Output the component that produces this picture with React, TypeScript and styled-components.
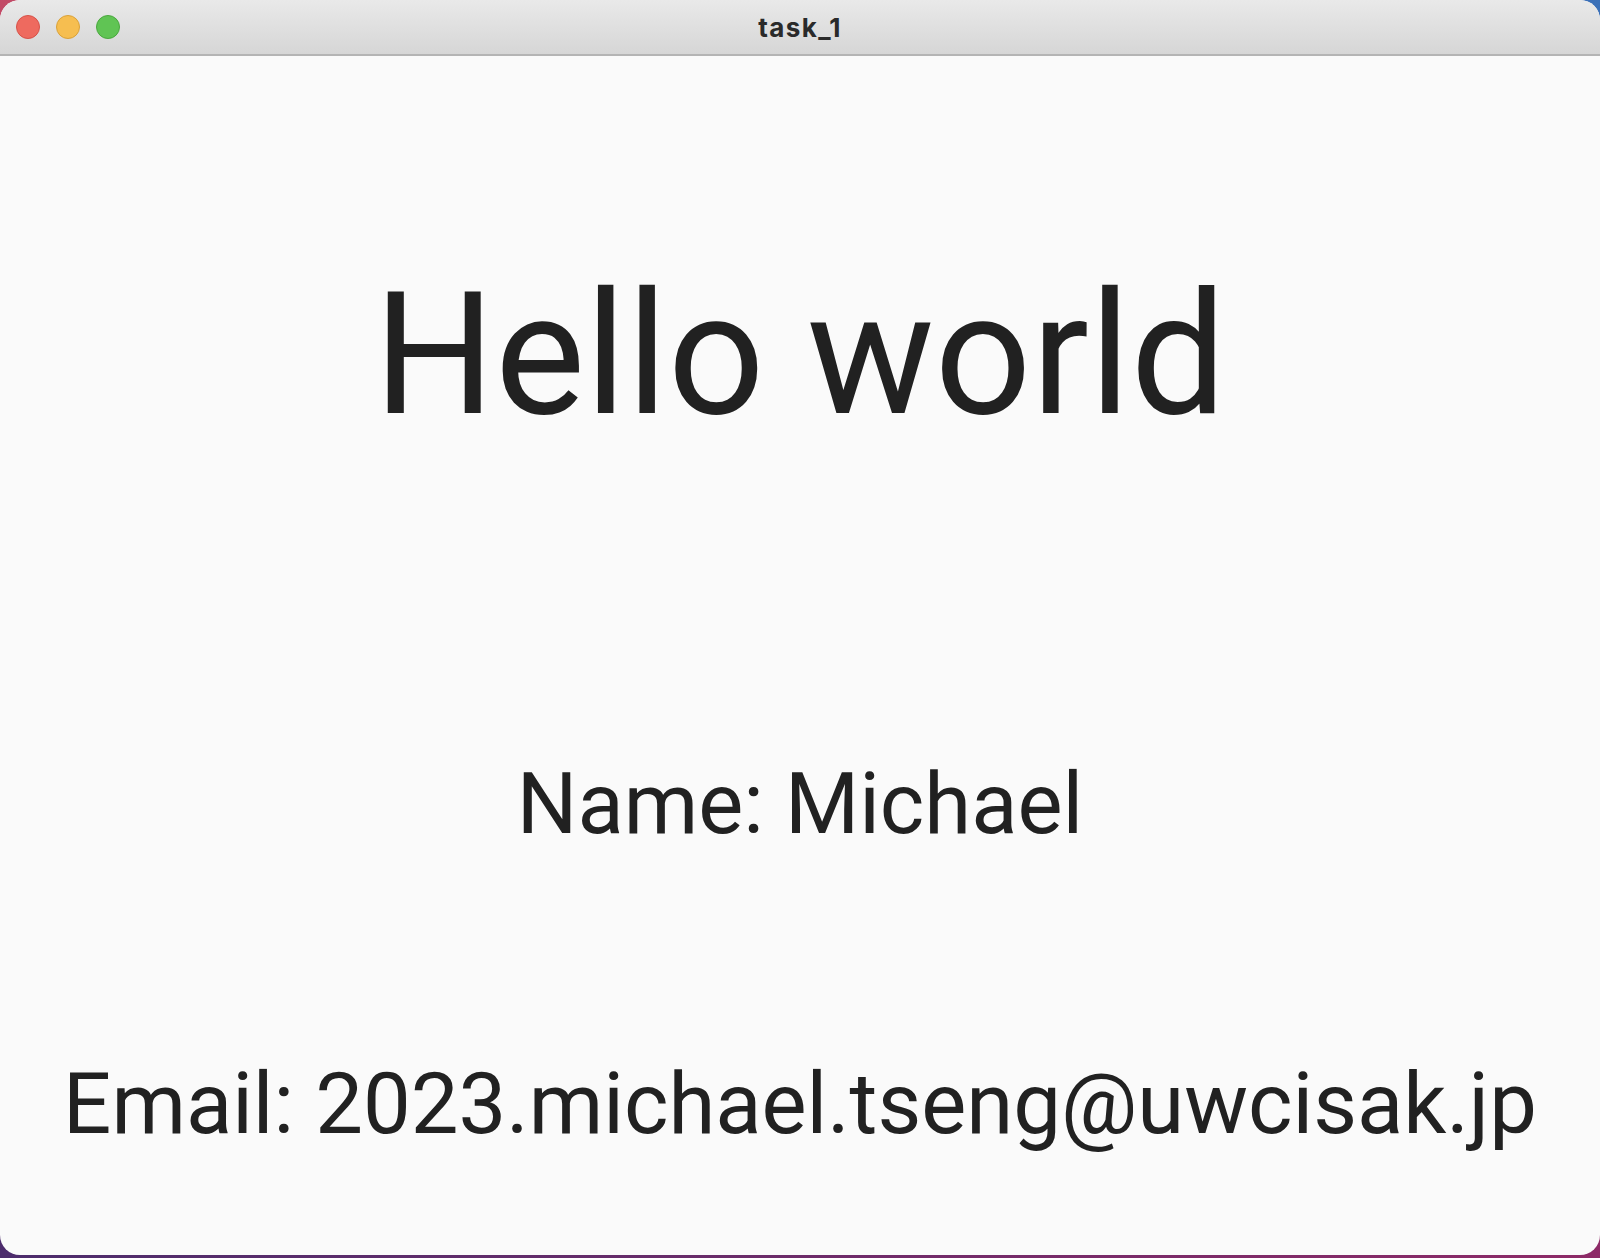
import React from "react";
import styled, { createGlobalStyle } from "styled-components";

const GlobalStyle = createGlobalStyle`
  html, body {
    margin: 0;
    padding: 0;
    width: 1600px;
    height: 1258px;
    overflow: hidden;
  }
`;

const Desktop = styled.div`
  width: 1600px;
  height: 1258px;
  display: flex;
  flex-direction: column;
  background:
    linear-gradient(90deg, #c24a66 0%, #3a70b8 100%) top / 100% 50% no-repeat,
    linear-gradient(90deg, #4c2c6c 0%, #8d2a67 100%) bottom / 100% 50% no-repeat;
`;

const Window = styled.div`
  height: 1255px;
  display: flex;
  flex-direction: column;
  border-radius: 20px;
  overflow: hidden;
  background: #fafafa;
`;

const TitleBar = styled.header`
  height: 54px;
  flex: none;
  display: flex;
  align-items: center;
  position: relative;
  background: linear-gradient(180deg, #e9e9e9 0%, #d6d6d6 100%);
  border-bottom: 2px solid #b4b4b4;
`;

const Lights = styled.div`
  display: flex;
  gap: 16px;
  padding-left: 16px;
  position: relative;
  z-index: 1;
`;

const Light = styled.span<{ $fill: string; $edge: string }>`
  width: 24px;
  height: 24px;
  border-radius: 50%;
  box-sizing: border-box;
  background: ${(p) => p.$fill};
  border: 1px solid ${(p) => p.$edge};
`;

const Title = styled.div`
  position: absolute;
  inset: 0;
  display: flex;
  align-items: center;
  justify-content: center;
  font-family: Inter, "Liberation Sans", sans-serif;
  font-weight: 700;
  font-size: 26px;
  letter-spacing: 1.4px;
  color: #2a2a2a;
  padding-top: 1px;
`;

const Content = styled.main`
  flex: 1;
  display: flex;
  flex-direction: column;
  align-items: center;
  font-family: Roboto, "Liberation Sans", sans-serif;
  color: #212121;
`;

const Line = styled.div<{ $size: number; $top: number }>`
  font-size: ${(p) => p.$size}px;
  line-height: 1.172;
  margin-top: ${(p) => p.$top}px;
  white-space: nowrap;
`;

export default function App() {
  return (
    <>
      <GlobalStyle />
      <Desktop>
        <Window>
          <TitleBar>
            <Lights>
              <Light $fill="#ee6a5f" $edge="#d65249" />
              <Light $fill="#f6be50" $edge="#d9a13a" />
              <Light $fill="#60c454" $edge="#4aa73e" />
            </Lights>
            <Title>task_1</Title>
          </TitleBar>
          <Content>
            <Line $size={170} $top={200}>Hello world</Line>
            <Line $size={85} $top={300}>Name: Michael</Line>
            <Line $size={85} $top={200}>Email: 2023.michael.tseng@uwcisak.jp</Line>
          </Content>
        </Window>
      </Desktop>
    </>
  );
}
